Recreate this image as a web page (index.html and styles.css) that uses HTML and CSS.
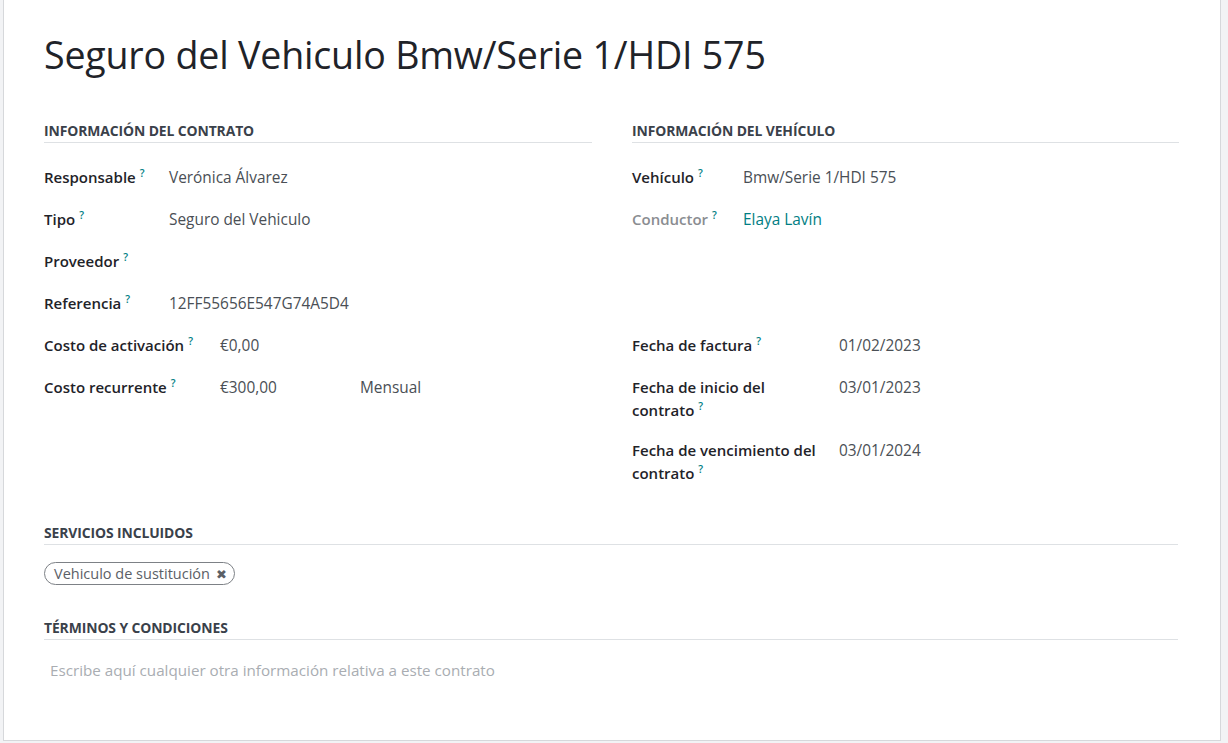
FILE: index.html
```html
<!DOCTYPE html>
<html lang="es">
<head>
<meta charset="utf-8">
<title>Seguro del Vehiculo</title>
<link rel="stylesheet" href="styles.css">
</head>
<body>
<div class="sheet">
  <h1 class="title">Seguro del Vehiculo Bmw/Serie 1/HDI 575</h1>

  <div class="columns">
    <section class="group">
      <h2 class="sep">INFORMACIÓN DEL CONTRATO</h2>
      <div class="fields w-a">
        <div class="row"><div class="label">Responsable<sup>?</sup></div><div class="value">Verónica Álvarez</div></div>
        <div class="row"><div class="label">Tipo<sup>?</sup></div><div class="value">Seguro del Vehiculo</div></div>
        <div class="row"><div class="label">Proveedor<sup>?</sup></div><div class="value"></div></div>
        <div class="row"><div class="label">Referencia<sup>?</sup></div><div class="value">12FF55656E547G74A5D4</div></div>
      </div>
      <div class="fields w-b">
        <div class="row"><div class="label">Costo de activación<sup>?</sup></div><div class="value">€0,00</div></div>
        <div class="row"><div class="label">Costo recurrente<sup>?</sup></div><div class="value split"><span class="amount">€300,00</span><span>Mensual</span></div></div>
      </div>
    </section>

    <section class="group">
      <h2 class="sep">INFORMACIÓN DEL VEHÍCULO</h2>
      <div class="fields w-c">
        <div class="row"><div class="label">Vehículo<sup>?</sup></div><div class="value">Bmw/Serie 1/HDI 575</div></div>
        <div class="row"><div class="label muted">Conductor<sup>?</sup></div><div class="value link">Elaya Lavín</div></div>
        <div class="spacer"></div>
      </div>
      <div class="fields w-d">
        <div class="row"><div class="label">Fecha de factura<sup>?</sup></div><div class="value">01/02/2023</div></div>
        <div class="row"><div class="label">Fecha de inicio del contrato<sup>?</sup></div><div class="value">03/01/2023</div></div>
        <div class="row"><div class="label">Fecha de vencimiento del contrato<sup>?</sup></div><div class="value">03/01/2024</div></div>
      </div>
    </section>
  </div>

  <section class="block">
    <h2 class="sep">SERVICIOS INCLUIDOS</h2>
    <div class="tags"><span class="tag">Vehiculo de sustitución <span class="x">✖</span></span></div>
  </section>

  <section class="block">
    <h2 class="sep">TÉRMINOS Y CONDICIONES</h2>
    <div class="placeholder">Escribe aquí cualquier otra información relativa a este contrato</div>
  </section>
</div>
</body>
</html>
```

FILE: styles.css
```css
html, body {
  margin: 0;
  padding: 0;
  background: #f2f3f5;
}
body {
  font-family: "Open Sans", "Noto Sans", sans-serif;
  color: #212529;
  padding-left: 3px;
}
.sheet {
  box-sizing: border-box;
  width: 1218px;
  height: 741px;
  background: #ffffff;
  border: 1px solid #d6d8db;
  border-top: none;
  padding: 30px 42px 0 40px;
}
.title {
  margin: 0;
  font-weight: 400;
  font-size: 37.6px;
  line-height: 50px;
  color: #1f2329;
  letter-spacing: -0.2px;
}
.columns {
  display: grid;
  grid-template-columns: 548px 547px;
  column-gap: 40px;
  margin-top: 41px;
}
.sep {
  margin: 0;
  font-size: 13.9px;
  font-weight: 700;
  color: #3a414a;
  line-height: 20px;
  padding-bottom: 1px;
  border-bottom: 1px solid #dee1e4;
  letter-spacing: -0.1px;
}
.fields {
  display: flex;
  flex-direction: column;
}
.group .fields:first-of-type {
  margin-top: 23px;
}
.row {
  display: grid;
  min-height: 42px;
  line-height: 23px;
}
.w-a .row { grid-template-columns: 125px 1fr; }
.w-b .row { grid-template-columns: 176px 1fr; }
.w-c .row { grid-template-columns: 111px 1fr; }
.w-d .row { grid-template-columns: 207px 1fr; }
.label {
  font-size: 15px;
  font-weight: 600;
  color: #1f2329;
  padding-bottom: 17px;
  padding-right: 12px;
}
.label.muted {
  color: #8a8d91;
}
.label sup {
  color: #017e84;
  font-size: 10.5px;
  font-weight: 600;
  margin-left: 4px;
  vertical-align: 6px;
  line-height: 0;
}
.value {
  font-size: 15.4px;
  color: #4a4f55;
}
.value.link {
  color: #017e84;
}
.split {
  display: flex;
}
.split .amount {
  width: 140px;
}
.spacer {
  height: 84px;
}
.columns + .block {
  margin-top: 21px;
}
.block + .block {
  margin-top: 33px;
}
.tags {
  padding-top: 17px;
}
.tag {
  display: inline-block;
  box-sizing: border-box;
  height: 23px;
  line-height: 21px;
  padding: 0 7px 0 9px;
  border: 1px solid #7d8186;
  border-radius: 12px;
  font-size: 14.5px;
  color: #5b6066;
}
.tag .x {
  font-size: 13px;
  color: #5b6066;
  margin-left: 2px;
}
.placeholder {
  margin-top: 19px;
  padding-left: 6px;
  font-size: 15.2px;
  color: #a9adb2;
  line-height: 23px;
}
```
